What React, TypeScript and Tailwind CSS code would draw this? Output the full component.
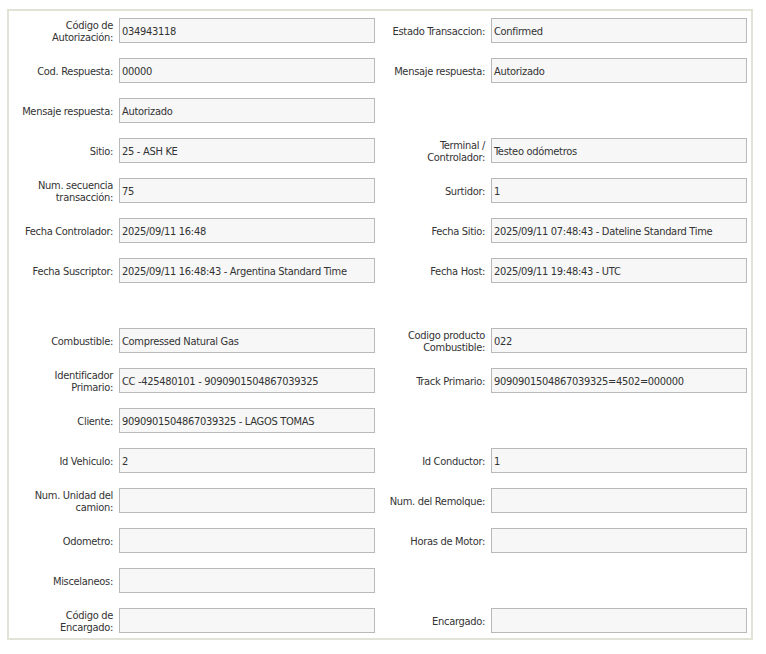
type Field = { label: string[]; value?: string }
type Row = [Field, Field | null]

const ROWS: Row[] = [
  [{ label: ['Código de', 'Autorización:'], value: '034943118' }, { label: ['Estado Transaccion:'], value: 'Confirmed' }],
  [{ label: ['Cod. Respuesta:'], value: '00000' }, { label: ['Mensaje respuesta:'], value: 'Autorizado' }],
  [{ label: ['Mensaje respuesta:'], value: 'Autorizado' }, null],
  [{ label: ['Sitio:'], value: '25 - ASH KE' }, { label: ['Terminal /', 'Controlador:'], value: 'Testeo odómetros' }],
  [{ label: ['Num. secuencia', 'transacción:'], value: '75' }, { label: ['Surtidor:'], value: '1' }],
  [{ label: ['Fecha Controlador:'], value: '2025/09/11 16:48' }, { label: ['Fecha Sitio:'], value: '2025/09/11 07:48:43 - Dateline Standard Time' }],
  [{ label: ['Fecha Suscriptor:'], value: '2025/09/11 16:48:43 - Argentina Standard Time' }, { label: ['Fecha Host:'], value: '2025/09/11 19:48:43 - UTC' }],
]

const ROWS_2: Row[] = [
  [{ label: ['Combustible:'], value: 'Compressed Natural Gas' }, { label: ['Codigo producto', 'Combustible:'], value: '022' }],
  [{ label: ['Identificador', 'Primario:'], value: 'CC -425480101 - 9090901504867039325' }, { label: ['Track Primario:'], value: '9090901504867039325=4502=000000' }],
  [{ label: ['Cliente:'], value: '9090901504867039325 - LAGOS TOMAS' }, null],
  [{ label: ['Id Vehiculo:'], value: '2' }, { label: ['Id Conductor:'], value: '1' }],
  [{ label: ['Num. Unidad del', 'camion:'] }, { label: ['Num. del Remolque:'] }],
  [{ label: ['Odometro:'] }, { label: ['Horas de Motor:'] }],
  [{ label: ['Miscelaneos:'] }, null],
  [{ label: ['Código de', 'Encargado:'] }, { label: ['Encargado:'] }],
]

function Cell({ field, labelWidth }: { field: Field | null; labelWidth: string }) {
  if (!field) return <div className={`${labelWidth} shrink-0`} />
  return (
    <>
      <div className={`${labelWidth} shrink-0 pt-[2px] pr-[6px] text-right leading-[12px]`}>
        {field.label.map((l) => (
          <div key={l}>{l}</div>
        ))}
      </div>
      <div className="flex h-[25px] w-[256px] shrink-0 items-center border border-[#b9b9b9] bg-[#f7f7f7] px-[2px] pt-[3px] whitespace-nowrap">
        {field.value}
      </div>
    </>
  )
}

function FormRow({ row }: { row: Row }) {
  const [left, right] = row
  return (
    <div className="flex h-[25px] items-center">
      <Cell field={left} labelWidth="w-[110px]" />
      {right ? <Cell field={right} labelWidth="w-[116px]" /> : null}
    </div>
  )
}

export default function App() {
  return (
    <div
      className="min-h-[654px] bg-white pt-[9px] pl-[7px] text-[11px] tracking-[-0.3px] text-[#333]"
      style={{ fontFamily: '"DejaVu Sans Condensed", "DejaVu Sans", sans-serif' }}
    >
      <div className="w-[746px] border-2 border-[#e2e2d6] pt-[7px] pb-[5px]">
        <div className="flex flex-col gap-[15px]">
          {ROWS.map((r, i) => (
            <FormRow key={i} row={r} />
          ))}
        </div>
        <div className="mt-[45px] flex flex-col gap-[15px]">
          {ROWS_2.map((r, i) => (
            <FormRow key={i} row={r} />
          ))}
        </div>
      </div>
    </div>
  )
}
